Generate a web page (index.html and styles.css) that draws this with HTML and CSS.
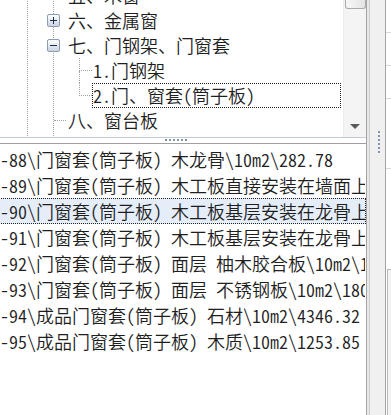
FILE: index.html
```html
<!DOCTYPE html>
<html lang="zh-CN">
<head>
<meta charset="utf-8">
<title>定额章节</title>
<link rel="stylesheet" href="styles.css">
</head>
<body>
<div class="app">
  <div class="left">
    <div class="tree-pane">
      <div class="tree">
        <div class="lvl0">
          <div class="lvl1">
            <div class="row"><span class="hconn"></span><span class="label">五、木窗</span></div>
            <div class="row"><span class="box plus"></span><span class="label">六、金属窗</span></div>
            <div class="row"><span class="box minus"></span><span class="label">七、门钢架、门窗套</span></div>
            <div class="group">
              <div class="row2"><span class="elbow"><i></i><i></i></span><span class="label2">1.门钢架</span></div>
              <div class="row2 last"><span class="elbow"><i></i><i></i></span><span class="label2 focus">2.门、窗套(筒子板)</span></div>
            </div>
            <div class="row"><span class="hconn"></span><span class="label">八、窗台板</span></div>
            <div class="row"><span class="hconn"></span><span class="label">九、窗帘、窗帘盒、轨</span></div>
          </div>
        </div>
      </div>
      <div class="vscroll">
        <div class="thumb"></div>
        <div class="arrow"></div>
      </div>
    </div>
    <div class="hsplit"><span class="hgrip"></span></div>
    <div class="list">
      <div class="item">-88\门窗套(筒子板) 木龙骨\10m2\282.78</div>
      <div class="item">-89\门窗套(筒子板) 木工板直接安装在墙面上\10m2\1860.45</div>
      <div class="item sel">-90\门窗套(筒子板) 木工板基层安装在龙骨上\10m2\1506.20</div>
      <div class="item">-91\门窗套(筒子板) 木工板基层安装在龙骨上\10m2\1506.20</div>
      <div class="item">-92\门窗套(筒子板) 面层 柚木胶合板\10m2\1034.60</div>
      <div class="item">-93\门窗套(筒子板) 面层 不锈钢板\10m2\1809.27</div>
      <div class="item">-94\成品门窗套(筒子板) 石材\10m2\4346.32</div>
      <div class="item">-95\成品门窗套(筒子板) 木质\10m2\1253.85</div>
    </div>
  </div>
  <div class="vsplit"><span class="vgrip"></span></div>
  <div class="right">
    <div class="cell"></div>
    <div class="cell"></div>
    <div class="cell"></div>
    <div class="cell tall"></div>
    <div class="inner"></div>
  </div>
</div>
</body>
</html>
```

FILE: styles.css
```css
* { box-sizing: border-box; margin: 0; padding: 0; }
html, body { width: 391px; height: 415px; overflow: hidden; background: #fff; }
body { font-family: "Noto Sans CJK SC", "Noto Sans", sans-serif; color: #1e1e1e; font-weight: 350; }

.app { display: flex; height: 415px; }
.left { width: 367px; display: flex; flex-direction: column; border-right: 1px solid #a3a3a3; }

/* tree */
.tree-pane { height: 138px; display: flex; border-bottom: 1px solid #c4cad3; }
.tree { flex: 1; overflow: hidden; padding-left: 27px; font-size: 18px; font-feature-settings: "hwid"; }
.lvl0 { margin-top: -17px; border-left: 1px dotted #a0a0a0; padding-left: 25px; }
.lvl1 { border-left: 1px dotted #a0a0a0; }
.row { display: flex; align-items: center; height: 25px; line-height: 25px; white-space: nowrap; }
.hconn { width: 12px; border-top: 1px dotted #a0a0a0; margin-right: 2px; }
.box {
  width: 13px; height: 13px; margin-left: -7px; margin-right: 8px;
  border: 1px solid #8b9db5; border-radius: 2px;
  background: linear-gradient(to bottom, #ffffff, #dfe5ee 60%, #cbd4e1);
  display: flex; align-items: center; justify-content: center; position: relative;
}
.box::before { content: ""; width: 7px; height: 1px; background: #1c2f4a; }
.plus::after { content: ""; position: absolute; width: 1px; height: 7px; background: #1c2f4a; left: 5px; top: 2px; }
.group { margin-left: 25px; }
.row2 { display: flex; height: 25px; white-space: nowrap; }
.elbow { width: 13px; display: flex; flex-direction: column; }
.elbow i { flex: 1; border-left: 1px dotted #a0a0a0; }
.elbow i:first-child { border-bottom: 1px dotted #a0a0a0; flex: 0 0 13px; }
.last .elbow i:last-child { border-left-color: transparent; }
.label2 { line-height: 23px; padding-left: 0; border: 1px solid transparent; }
.focus { flex: 1; margin-right: 2px; border: 1px dotted #222; }

/* scrollbar */
.vscroll { width: 23px; background: #f4f4f4; display: flex; flex-direction: column; align-items: center; border-left: 1px solid #ececec; }
.thumb { width: 21px; height: 9px; border: 1px solid #a9a9a9; border-top: 0; border-radius: 0 0 3px 3px; background: linear-gradient(to right, #f7f7f7, #e4e4e4); }
.arrow { margin-top: auto; margin-bottom: 8px; border-left: 5px solid transparent; border-right: 5px solid transparent; border-top: 5px solid #5a5a5a; }

/* horizontal splitter */
.hsplit { height: 5px; padding-left: 165px; padding-top: 1px; }
.hgrip { display: block; width: 22px; height: 2px; background: repeating-linear-gradient(to right, #8494ad 0 2px, transparent 2px 4px); }

/* list */
.list { flex: 1; border-top: 1px solid #a0a0a0; padding-top: 2px; overflow: hidden; font-size: 18px; font-feature-settings: "hwid"; }
.item { height: 26px; line-height: 24px; white-space: nowrap; overflow: hidden; margin-left: -4px; padding-left: 3px; border: 1px solid transparent; }
.item.sel { background: #e4edf8; border: 1px dotted #222; }

/* right side */
.vsplit { width: 18px; background: linear-gradient(to right, #e8e8e8 0 2px, #cdcdcd 2px 3px, #f0f0f0 3px); padding: 131px 0 0 11px; }
.vgrip { display: block; width: 2px; height: 22px; background: repeating-linear-gradient(to bottom, #8494ad 0 2px, transparent 2px 4px); }
.right { flex: 1; border-left: 1px solid #a3a3a3; background: #fff; display: flex; flex-direction: column; }
.cell { height: 33px; border-bottom: 1px solid #d8d8d8; }
.cell.tall { height: 70px; }
.inner { margin-top: 100px; flex: 1; border-top: 1px solid #b9b9b9; border-left: 1px solid #b9b9b9; background: #f3f3f3; margin-left: 1px; }
```
